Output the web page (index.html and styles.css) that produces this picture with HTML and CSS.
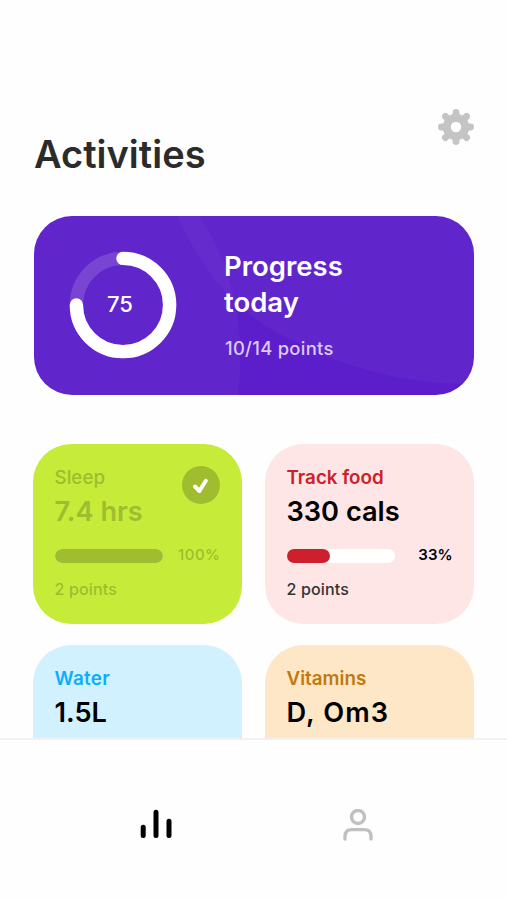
FILE: index.html
```html
<!DOCTYPE html>
<html lang="en">
<head>
    <meta charset="UTF-8">
    <meta name="viewport" content="width=device-width, initial-scale=1.0">
    <title>Activities</title>
    <link rel="stylesheet" href="styles.css">
</head>
<body>
    <main class="screen">
        <header class="header">
            <h1>Activities</h1>
            <svg class="settings" viewBox="0 0 36 36" width="36" height="36">
                <g stroke="#c4c4c4" stroke-width="6.8" stroke-linecap="round">
                    <path d="M18 3.4V32.6M3.4 18H32.6M7.4 7.4L28.6 28.6M28.6 7.4L7.4 28.6"/>
                </g>
                <circle cx="18" cy="18" r="13.2" fill="#c4c4c4"/>
                <circle cx="18" cy="18" r="5.2" fill="#fff"/>
            </svg>
        </header>

        <section class="progress">
            <svg class="progress-bg" viewBox="0 0 440 179" width="440" height="179">
                <path d="M0 0H165C196 45 213 110 204 179H0Z"/>
                <path d="M143 0C172 62 205 95 240 115C305 151 365 168 440 168V0Z"/>
            </svg>
            <div class="ring">
                <svg viewBox="0 0 108 108" width="108" height="108">
                    <circle class="ring-track" cx="54" cy="54" r="46.6"/>
                    <path class="ring-value" d="M54 7.4A46.6 46.6 0 1 1 7.4 54"/>
                </svg>
                <span>75</span>
            </div>
            <div class="progress-text">
                <h2>Progress<br>today</h2>
                <p>10/14 points</p>
            </div>
        </section>

        <section class="cards">
            <article class="card sleep">
                <h3>Sleep</h3>
                <p class="value">7.4 hrs</p>
                <div class="row">
                    <div class="bar"><div class="fill" style="width: 100%"></div></div>
                    <span class="percent">100%</span>
                </div>
                <p class="points">2 points</p>
                <svg class="check" viewBox="0 0 38 38" width="38" height="38">
                    <circle cx="19" cy="19" r="19"/>
                    <path d="M13 20.5L17.4 25L23.8 14.8"/>
                </svg>
            </article>
            <article class="card food">
                <h3>Track food</h3>
                <p class="value">330 cals</p>
                <div class="row">
                    <div class="bar"><div class="fill" style="width: 40%"></div></div>
                    <span class="percent">33%</span>
                </div>
                <p class="points">2 points</p>
            </article>
            <article class="card water">
                <h3>Water</h3>
                <p class="value">1.5L</p>
            </article>
            <article class="card vitamins">
                <h3>Vitamins</h3>
                <p class="value">D, Om3</p>
            </article>
        </section>
    </main>

    <nav class="tabs">
        <svg viewBox="0 0 34 32" width="34" height="32" stroke="#000" stroke-width="5" stroke-linecap="round">
            <path d="M4.2 18.2V26.6M17 3.3V26.6M30 12.2V26.6"/>
        </svg>
        <svg viewBox="0 0 32 34" width="32" height="34" fill="none" stroke="#c0c0c0" stroke-width="3.4" stroke-linecap="round">
            <circle cx="16" cy="8" r="6.5"/>
            <path d="M3 30V27.5C3 23.3 5.3 20.6 9.6 20.6H22.4C26.7 20.6 29 23.3 29 27.5V30"/>
        </svg>
    </nav>
</body>
</html>
```
FILE: styles.css
```css
* {
    box-sizing: border-box;
}

body {
    margin: 0;
    height: 900px;
    font-family: Inter, "Liberation Sans", sans-serif;
    background-color: #fefefe;
    color: #000;
    overflow: hidden;
}

h1, h2, h3, p {
    margin: 0;
    white-space: nowrap;
}

svg {
    display: block;
}

.screen {
    height: 738px;
    padding: 109px 33px 0;
    overflow: hidden;
}

.header {
    display: flex;
    justify-content: space-between;
    height: 107px;
}

h1 {
    margin: 22px 0 0 1px;
    font-size: 38px;
    line-height: 46px;
    font-weight: 600;
    color: #2b2b2b;
}

/* progress */
.progress {
    position: relative;
    display: flex;
    width: 440px;
    height: 179px;
    margin-left: 1px;
    border-radius: 38px;
    background-color: #5c1ecb;
    color: #fff;
    overflow: hidden;
}

.progress-bg {
    position: absolute;
    inset: 0;
    fill: rgba(255, 255, 255, 0.03);
}

.ring {
    position: relative;
    display: grid;
    place-items: center;
    width: 108px;
    height: 108px;
    margin: 35px 0 0 35px;
}

.ring svg, .ring span {
    grid-area: 1 / 1;
}

.ring span {
    font-size: 22px;
    font-weight: 500;
    line-height: 26px;
    margin: 0 6px 2px 0;
}

.ring-track, .ring-value {
    fill: none;
    stroke: rgba(255, 255, 255, 0.15);
    stroke-width: 13.4;
}

.ring-value {
    stroke: #fff;
    stroke-linecap: round;
}

.progress-text {
    position: relative;
    margin: 33px 0 0 47px;
}

h2 {
    font-size: 27.5px;
    line-height: 35.5px;
    font-weight: 600;
}

.progress-text p {
    margin: 16px 0 0 1px;
    font-size: 18.4px;
    line-height: 24px;
    font-weight: 500;
    letter-spacing: 0.3px;
    color: #dccbf8;
}

/* activity cards */
.cards {
    display: grid;
    grid-template-columns: 209px 209px;
    gap: 21.5px 23px;
    margin-top: 49px;
}

.card {
    position: relative;
    height: 179.5px;
    padding: 22px 21.5px 0;
    border-radius: 38px;
}

h3 {
    font-size: 18.8px;
    line-height: 24px;
    font-weight: 600;
}

.value {
    margin-top: 4px;
    font-size: 27.2px;
    line-height: 36px;
    font-weight: 600;
}

.row {
    display: flex;
    justify-content: space-between;
    margin-top: 15px;
}

.bar {
    width: 108px;
    height: 14px;
    margin-top: 4px;
    border-radius: 7px;
    background-color: #fff;
}

.fill {
    height: 100%;
    border-radius: 7px;
}

.percent {
    font-size: 15px;
    line-height: 20px;
    font-weight: 600;
}

.points {
    margin-top: 14px;
    font-size: 16px;
    line-height: 20px;
    font-weight: 500;
    letter-spacing: 0.15px;
    color: #333;
}

.sleep {
    background-color: #c6ec39;
}

.sleep h3, .sleep .value, .sleep .percent, .sleep .points {
    color: #9fbd2e;
}

.sleep h3 {
    font-weight: 500;
}

.sleep .percent {
    font-weight: 500;
    letter-spacing: 0.5px;
}

.sleep .fill {
    background-color: #9fbd2e;
}

.check {
    position: absolute;
    top: 22px;
    right: 22px;
    fill: #9fbd2e;
}

.check path {
    fill: none;
    stroke: #fff;
    stroke-width: 4;
    stroke-linecap: round;
    stroke-linejoin: round;
}

.food {
    background-color: #fee6e7;
}

.food h3 {
    color: #cd202c;
}

.food .fill {
    background-color: #cd202c;
}

.water {
    background-color: #d2f1ff;
}

.water h3 {
    color: #0badff;
    letter-spacing: 0.3px;
}

.vitamins {
    background-color: #fee7c7;
}

.vitamins h3 {
    color: #c07a0c;
}

.vitamins .value {
    letter-spacing: 1.1px;
}

/* bottom tabs */
.tabs {
    display: flex;
    gap: 169px;
    height: 162px;
    padding: 69px 0 0 139px;
    border-top: 2px solid #f1f1f2;
    background-color: #fefefe;
}
```
